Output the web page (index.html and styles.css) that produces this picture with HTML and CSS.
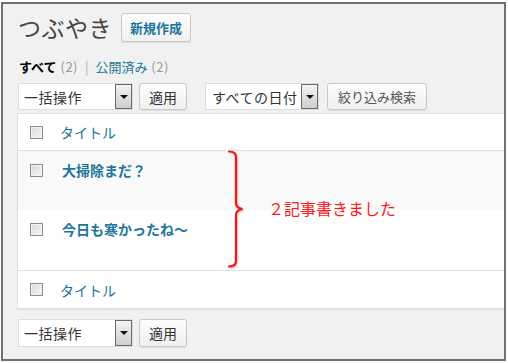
FILE: index.html
```html
<!DOCTYPE html>
<html lang="ja">
  <head>
    <meta charset="UTF-8" />
    <title>つぶやき</title>
    <link rel="stylesheet" href="styles.css">
  </head>
  <body>
    <div class="frame">
      <div class="head">
        <h1 class="title">つぶやき</h1>
        <span class="btn btn-new">新規作成</span>
      </div>

      <div class="status">
        <b class="current">すべて</b> <span class="count">(2)</span>
        <span class="sep">|</span>
        <span class="link">公開済み</span> <span class="count">(2)</span>
      </div>

      <div class="tablenav">
        <div class="select"><span class="value">一括操作</span><span class="arrow"></span></div>
        <span class="btn">適用</span>
        <div class="select select-date"><span class="value">すべての日付</span><span class="arrow"></span></div>
        <span class="btn btn-filter">絞り込み検索</span>
      </div>

      <div class="list">
        <div class="row row-head">
          <span class="check"><span class="box"></span></span>
          <span class="link">タイトル</span>
        </div>
        <div class="rows">
          <div class="row row-post alt">
            <span class="check"><span class="box"></span></span>
            <span class="link post">大掃除まだ？</span>
          </div>
          <div class="row row-post">
            <span class="check"><span class="box"></span></span>
            <span class="link post">今日も寒かったね～</span>
          </div>
          <!-- annotation -->
          <svg class="brace" width="20" height="118" viewBox="0 0 20 118">
            <path d="M2 1.5 Q9 1.5 9 7 L9 53 Q9 58 15.5 59 Q9 60 9 65 L9 111 Q9 116.5 2 116.5" />
          </svg>
          <span class="note">２記事書きました</span>
        </div>
        <div class="row row-foot">
          <span class="check"><span class="box"></span></span>
          <span class="link">タイトル</span>
        </div>
      </div>

      <div class="tablenav tablenav-bottom">
        <div class="select"><span class="value">一括操作</span><span class="arrow"></span></div>
        <span class="btn">適用</span>
      </div>
    </div>
  </body>
</html>
```

FILE: styles.css
```css
body {
  margin: 0;
  background-color: #fff;
  font-family: "Noto Sans CJK JP", "Liberation Sans", sans-serif;
  color: #333;
}

.frame {
  margin: 2px 0 0 1px;
  width: 505px;
  height: 359px;
  box-sizing: border-box;
  border: 2px solid #707070;
  background-color: #f1f1f1;
  padding: 9px 0 0 14px;
  overflow: hidden;
}

.head {
  display: flex;
  align-items: center;
  height: 29px;
  padding-left: 1px;
}

.title {
  margin: 0 9px 0 0;
  font-size: 23px;
  font-weight: normal;
  line-height: 29px;
  color: #464646;
  letter-spacing: 0.5px;
}

.btn {
  display: inline-flex;
  align-items: center;
  box-sizing: border-box;
  height: 27px;
  padding: 0 8px;
  border: 1px solid #c8c8c8;
  border-radius: 3px;
  background: linear-gradient(#fdfdfd, #f0f0f0);
  box-shadow: 0 1px 0 rgba(0, 0, 0, 0.08);
  font-size: 14px;
  color: #333;
}

.btn-new {
  height: 29px;
  padding: 0 8px;
  font-size: 13px;
  font-weight: bold;
  color: #21759b;
}

.btn-filter {
  font-size: 13px;
  color: #555;
  padding: 0 9px;
}

.status {
  margin-top: 16px;
  padding-left: 2px;
  font-size: 13px;
  line-height: 18px;
  word-spacing: 1px;
}

.status .current {
  color: #000;
}

.count {
  color: #999;
  letter-spacing: 0.5px;
}

.sep {
  color: #aaa;
  margin: 0 3px;
}

.link {
  color: #21759b;
}

.tablenav {
  display: flex;
  align-items: center;
  margin-top: 7px;
  padding-left: 1px;
  height: 27px;
}

.tablenav .btn {
  margin-left: 6px;
  width: 48px;
  justify-content: center;
}

.tablenav .btn-filter {
  width: 100px;
  margin-left: 8px;
}

.select {
  display: flex;
  align-items: center;
  box-sizing: border-box;
  width: 115px;
  height: 27px;
  border: 1px solid #dcdcdc;
  background-color: #fff;
  padding-left: 5px;
}

.select .value {
  flex: 1;
  font-size: 14px;
  color: #333;
  letter-spacing: 0.5px;
}

.select .arrow {
  display: flex;
  align-items: center;
  justify-content: center;
  box-sizing: border-box;
  width: 17px;
  height: 25px;
  border: 1px solid #6a6a6a;
  background: linear-gradient(#f4f4f4, #cdcdcd);
}

.select .arrow::after {
  content: "";
  border-left: 4px solid transparent;
  border-right: 4px solid transparent;
  border-top: 4px solid #111;
}

.select-date {
  width: 114px;
  margin-left: 18px;
  padding-left: 6px;
}

.list {
  margin-top: 3px;
  background-color: #fff;
  border: 1px solid #e1e1e1;
  border-right: none;
  box-shadow: 0 1px 1px rgba(0, 0, 0, 0.05);
}

.row {
  display: flex;
  align-items: center;
  box-sizing: border-box;
  font-size: 14px;
  line-height: 20px;
}

.row-head,
.row-foot {
  height: 37px;
}

.row-head {
  border-bottom: 1px solid #e1e1e1;
}

.rows {
  position: relative;
  border-bottom: 1px solid #e1e1e1;
}

.row-post {
  align-items: flex-start;
  height: 60px;
  padding-top: 9px;
}

.row-post.alt {
  height: 59px;
  background-color: #f9f9f9;
}

.check {
  display: flex;
  align-items: center;
  width: 42px;
  height: 20px;
  padding-left: 12px;
  box-sizing: border-box;
}

.box {
  width: 13px;
  height: 13px;
  box-sizing: border-box;
  border: 1px solid #8c8c8c;
  background: linear-gradient(135deg, #d9d9d9, #f7f7f7);
  box-shadow: inset 0 0 0 1px #f2f2f2;
}

.post {
  font-weight: bold;
  padding-left: 2px;
}

.brace {
  position: absolute;
  left: 209px;
  top: -1px;
  filter: drop-shadow(1px 1px 1px rgba(0, 0, 0, 0.2));
}

.brace path {
  fill: none;
  stroke: #ff1010;
  stroke-width: 2.2;
  stroke-linecap: round;
}

.note {
  position: absolute;
  left: 250px;
  top: 47px;
  font-size: 16px;
  line-height: 20px;
  color: #ff1a1a;
}

.tablenav-bottom {
  margin-top: 10px;
  height: 28px;
}

.tablenav-bottom .select,
.tablenav-bottom .btn {
  height: 28px;
}

.tablenav-bottom .select .arrow {
  height: 26px;
}
```
